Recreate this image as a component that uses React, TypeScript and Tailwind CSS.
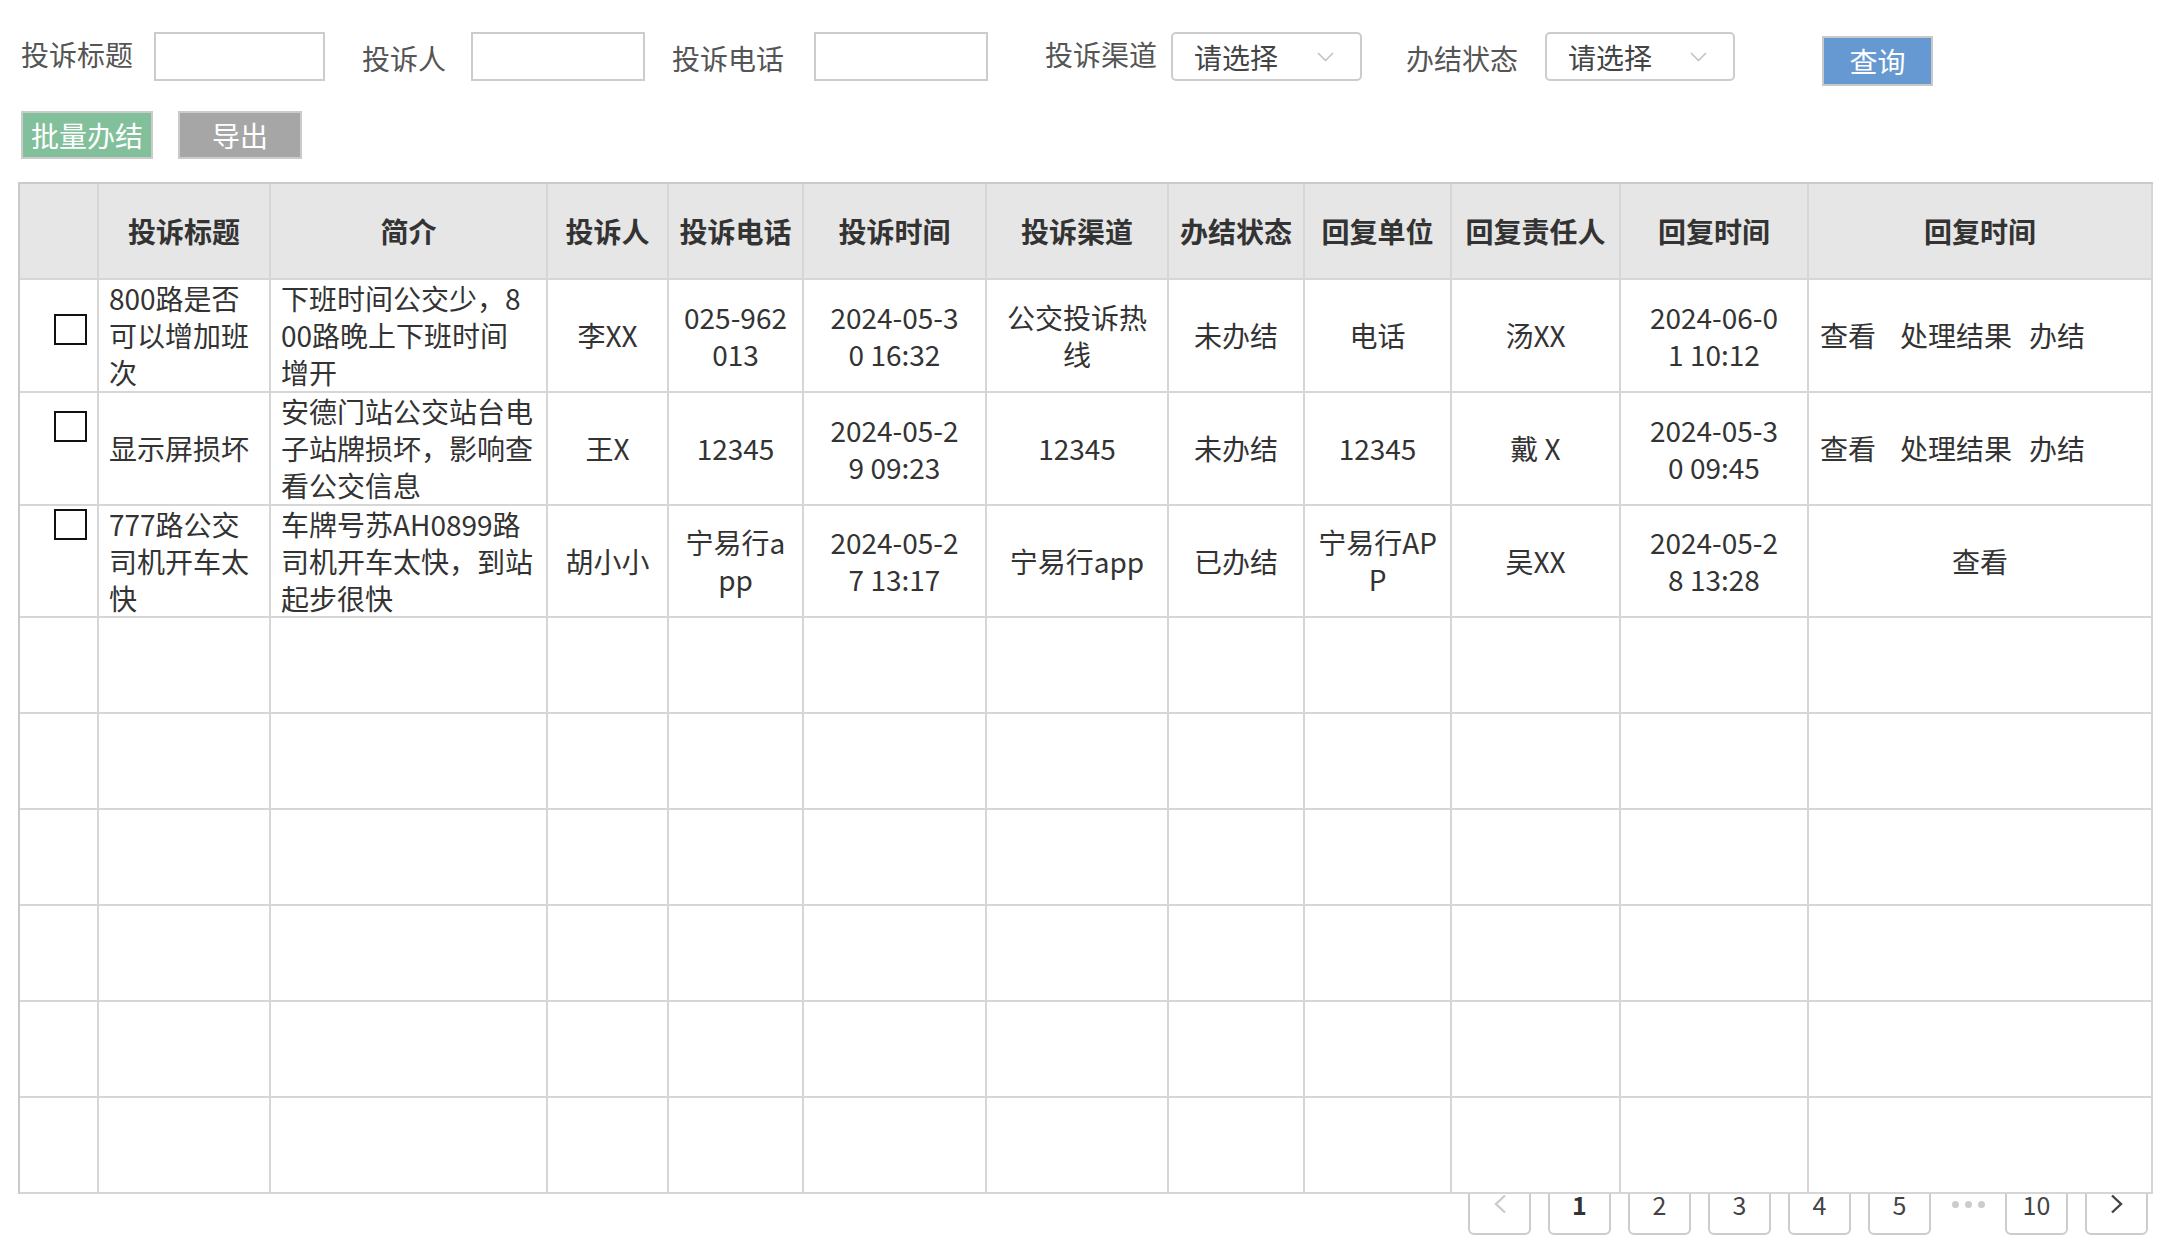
import React from "react";

type Row = {
  box: string;
  title: string[];
  desc: string[];
  person: string[];
  phone: string[];
  time: string[];
  channel: string[];
  status: string[];
  unit: string[];
  owner: string[];
  reply: string[];
  full: boolean;
};

const rows: Row[] = [
  {
    box: "mt-[34px]",
    title: ["800路是否", "可以增加班", "次"],
    desc: ["下班时间公交少，8", "00路晚上下班时间", "增开"],
    person: ["李XX"],
    phone: ["025-962", "013"],
    time: ["2024-05-3", "0 16:32"],
    channel: ["公交投诉热", "线"],
    status: ["未办结"],
    unit: ["电话"],
    owner: ["汤XX"],
    reply: ["2024-06-0", "1 10:12"],
    full: true,
  },
  {
    box: "mt-[18px]",
    title: ["显示屏损坏"],
    desc: ["安德门站公交站台电", "子站牌损坏，影响查", "看公交信息"],
    person: ["王X"],
    phone: ["12345"],
    time: ["2024-05-2", "9 09:23"],
    channel: ["12345"],
    status: ["未办结"],
    unit: ["12345"],
    owner: ["戴 X"],
    reply: ["2024-05-3", "0 09:45"],
    full: true,
  },
  {
    box: "mt-[3px]",
    title: ["777路公交", "司机开车太", "快"],
    desc: ["车牌号苏AH0899路", "司机开车太快，到站", "起步很快"],
    person: ["胡小小"],
    phone: ["宁易行a", "pp"],
    time: ["2024-05-2", "7 13:17"],
    channel: ["宁易行app"],
    status: ["已办结"],
    unit: ["宁易行AP", "P"],
    owner: ["吴XX"],
    reply: ["2024-05-2", "8 13:28"],
    full: false,
  },
];

const headers = [
  "",
  "投诉标题",
  "简介",
  "投诉人",
  "投诉电话",
  "投诉时间",
  "投诉渠道",
  "办结状态",
  "回复单位",
  "回复责任人",
  "回复时间",
  "回复时间",
];

const cell = "min-h-0 overflow-visible border-r-2 border-b-2 border-[#d6d6d6]";

const Lines = ({ lines }: { lines: string[] }) => (
  <>
    {lines.map((l) => (
      <div key={l} className="whitespace-nowrap">
        {l}
      </div>
    ))}
  </>
);

const Center = ({ lines }: { lines: string[] }) => (
  <div className={`${cell} flex flex-col items-center justify-center text-center`}>
    <Lines lines={lines} />
  </div>
);

const Left = ({ lines }: { lines: string[] }) => (
  <div className={`${cell} flex flex-col justify-center pl-[10px]`}>
    <Lines lines={lines} />
  </div>
);

const Chevron = () => (
  <svg width="17" height="10" viewBox="0 0 17 10" fill="none">
    <polyline points="1,1 8.5,8.5 16,1" stroke="#bdbdbd" strokeWidth="1.4" />
  </svg>
);

const PageBtn = ({ children, className }: { children: React.ReactNode; className?: string }) => (
  <div
    className={`flex h-[62px] w-[63px] items-center justify-center rounded-[6px] border-2 border-[#cccccc] bg-white text-[25px] leading-none ${className ?? ""}`}
  >
    {children}
  </div>
);

export default function App() {
  return (
    <div className="min-h-[1257px] w-[2173px] bg-white pt-[32px] font-['Noto_Sans_CJK_SC','Noto_Sans',sans-serif] text-[#333333]">
      {/* 查询条件 */}
      <div className="flex h-[49px] items-start pl-[21px] text-[28px] leading-[28px]">
        <div className="mt-[8px] w-[133px] whitespace-nowrap text-[#555555]">投诉标题</div>
        <div className="h-[49px] w-[171px] border-2 border-[#cccccc]" />
        <div className="ml-[37px] mt-[12px] w-[109px] whitespace-nowrap text-[#555555]">投诉人</div>
        <div className="h-[49px] w-[174px] border-2 border-[#cccccc]" />
        <div className="ml-[27px] mt-[12px] w-[142px] whitespace-nowrap text-[#555555]">投诉电话</div>
        <div className="h-[49px] w-[174px] border-2 border-[#cccccc]" />
        <div className="ml-[57px] mt-[8px] w-[126px] whitespace-nowrap text-[#555555]">投诉渠道</div>
        <div className="flex h-[49px] w-[191px] items-center justify-between rounded-[5px] border-2 border-[#cccccc] pl-[21px] pr-[26px] text-[#444444]">
          <span>请选择</span>
          <Chevron />
        </div>
        <div className="ml-[44px] mt-[12px] w-[139px] whitespace-nowrap text-[#555555]">办结状态</div>
        <div className="flex h-[49px] w-[190px] items-center justify-between rounded-[5px] border-2 border-[#cccccc] pl-[21px] pr-[26px] text-[#444444]">
          <span>请选择</span>
          <Chevron />
        </div>
        <button className="ml-[87px] mt-[4px] flex h-[50px] w-[111px] shrink-0 items-center justify-center border-2 border-[#c9c9c9] bg-[#6699d1] text-white">
          查询
        </button>
      </div>

      {/* 操作按钮 */}
      <div className="mt-[30px] flex gap-[25px] pl-[21px] text-[28px] leading-[28px] text-white">
        <button className="flex h-[48px] w-[132px] items-center justify-center border-2 border-[#cbcbcb] bg-[#82bf9b]">
          批量办结
        </button>
        <button className="flex h-[48px] w-[124px] items-center justify-center border-2 border-[#cbcbcb] bg-[#a6a6a6]">
          导出
        </button>
      </div>

      {/* 表格 */}
      <div className="relative z-10 ml-[18px] mt-[23px] w-[2135px] border-l-2 border-t-2 border-[#cacaca] bg-white text-[28px] leading-[37px]">
        <div className="grid grid-cols-[79px_172px_277px_121px_135px_183px_182px_136px_147px_169px_188px_344px] grid-rows-[96px_113px_113px_112px_96px_96px_96px_96px_96px_96px]">
          {headers.map((h, i) => (
            <div
              key={i}
              className={`${cell} flex items-center justify-center bg-[#e6e6e6] font-bold`}
            >
              {h}
            </div>
          ))}

          {rows.map((r, ri) => (
            <React.Fragment key={ri}>
              <div className={`${cell} pl-[34px]`}>
                <div className={`${r.box} h-[31px] w-[33px] border-2 border-[#111111] bg-white`} />
              </div>
              <Left lines={r.title} />
              <Left lines={r.desc} />
              <Center lines={r.person} />
              <Center lines={r.phone} />
              <Center lines={r.time} />
              <Center lines={r.channel} />
              <Center lines={r.status} />
              <Center lines={r.unit} />
              <Center lines={r.owner} />
              <Center lines={r.reply} />
              {r.full ? (
                <div className={`${cell} flex items-center whitespace-nowrap pl-[11px]`}>
                  <span>查看</span>
                  <span className="ml-[24px]">处理结果</span>
                  <span className="ml-[17px]">办结</span>
                </div>
              ) : (
                <Center lines={["查看"]} />
              )}
            </React.Fragment>
          ))}

          {Array.from({ length: 6 }).map((_, ri) => (
            <React.Fragment key={`e${ri}`}>
              {headers.map((_, ci) => (
                <div key={ci} className={cell} />
              ))}
            </React.Fragment>
          ))}
        </div>
      </div>

      {/* 分页 */}
      <div className="mt-[-21px] flex justify-end gap-[17px] pr-[25px] text-[#444444]">
        <PageBtn>
          <svg width="14" height="20" viewBox="0 0 14 20" fill="none">
            <polyline points="12,1.5 3,10 12,18.5" stroke="#cccccc" strokeWidth="2.4" />
          </svg>
        </PageBtn>
        <PageBtn className="font-bold text-[#333333]">1</PageBtn>
        <PageBtn>2</PageBtn>
        <PageBtn>3</PageBtn>
        <PageBtn>4</PageBtn>
        <PageBtn>5</PageBtn>
        <div className="flex h-[62px] w-[40px] items-center justify-center gap-[6px]">
          <span className="h-[7px] w-[7px] rounded-full bg-[#cccccc]" />
          <span className="h-[7px] w-[7px] rounded-full bg-[#cccccc]" />
          <span className="h-[7px] w-[7px] rounded-full bg-[#cccccc]" />
        </div>
        <PageBtn>10</PageBtn>
        <PageBtn>
          <svg width="14" height="20" viewBox="0 0 14 20" fill="none">
            <polyline points="2,1.5 11,10 2,18.5" stroke="#444444" strokeWidth="2.4" />
          </svg>
        </PageBtn>
      </div>
    </div>
  );
}
